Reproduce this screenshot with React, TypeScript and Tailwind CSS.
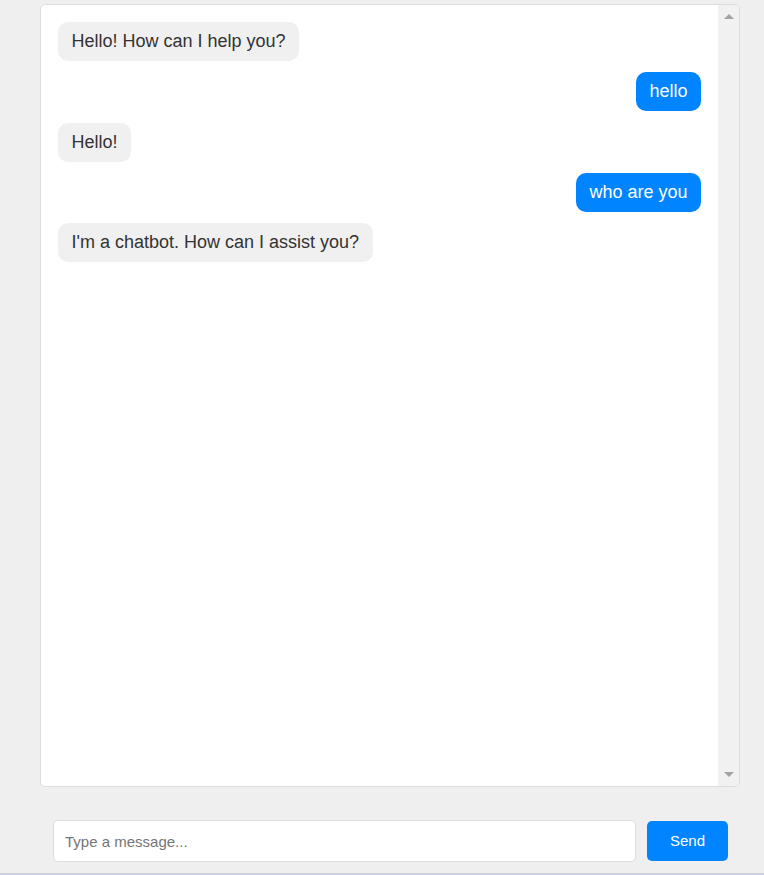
import React from "react";

type Msg = { from: "bot" | "user"; text: string };

const messages: Msg[] = [
  { from: "bot", text: "Hello! How can I help you?" },
  { from: "user", text: "hello" },
  { from: "bot", text: "Hello!" },
  { from: "user", text: "who are you" },
  { from: "bot", text: "I'm a chatbot. How can I assist you?" },
];

export default function App() {
  return (
    <div
      className="w-[764px] h-[875px] bg-[#efefef] flex flex-col"
      style={{ fontFamily: '"Liberation Sans", Arial, sans-serif' }}
    >
      <div className="mt-[4px] ml-[40px] w-[700px] h-[783px] bg-white border border-[#dddddd] rounded-[5px] flex overflow-hidden">
        <div className="flex-1 p-[17px] flex flex-col gap-[11.25px]">
          {messages.map((m, i) => (
            <div
              key={i}
              className={m.from === "user" ? "flex justify-end" : "flex justify-start"}
            >
              <div
                className={
                  m.from === "user"
                    ? "bg-[#0084ff] text-white text-[18px] leading-[21px] py-[9px] px-[13.5px] rounded-[10px]"
                    : "bg-[#f0f0f0] text-[#333333] text-[18px] leading-[21px] py-[9px] px-[13.5px] rounded-[10px]"
                }
              >
                {m.text}
              </div>
            </div>
          ))}
        </div>
        <div className="w-[21px] bg-[#f1f1f1] flex flex-col items-center justify-between pt-[9px] pb-[9px]">
          <div className="w-0 h-0 border-l-[5px] border-r-[5px] border-b-[5px] border-l-transparent border-r-transparent border-b-[#a3a3a3]" />
          <div className="w-0 h-0 border-l-[5px] border-r-[5px] border-t-[5px] border-l-transparent border-r-transparent border-t-[#a3a3a3]" />
        </div>
      </div>
      <div className="mt-[33px] ml-[53px] flex items-center gap-[11px]">
        <input
          type="text"
          placeholder="Type a message..."
          className="w-[583px] h-[42px] bg-white border border-[#dddddd] rounded-[5px] px-[11px] text-[15px] text-[#333] placeholder:text-[#757575] outline-none"
          style={{ fontFamily: '"Liberation Sans", Arial, sans-serif' }}
        />
        <button
          className="w-[81px] h-[40px] bg-[#0084ff] text-white text-[15px] rounded-[5px]"
          style={{ fontFamily: '"Liberation Sans", Arial, sans-serif' }}
        >
          Send
        </button>
      </div>
      <div className="flex-1" />
      <div className="h-[2px] bg-[#c9d0e2]" />
    </div>
  );
}
